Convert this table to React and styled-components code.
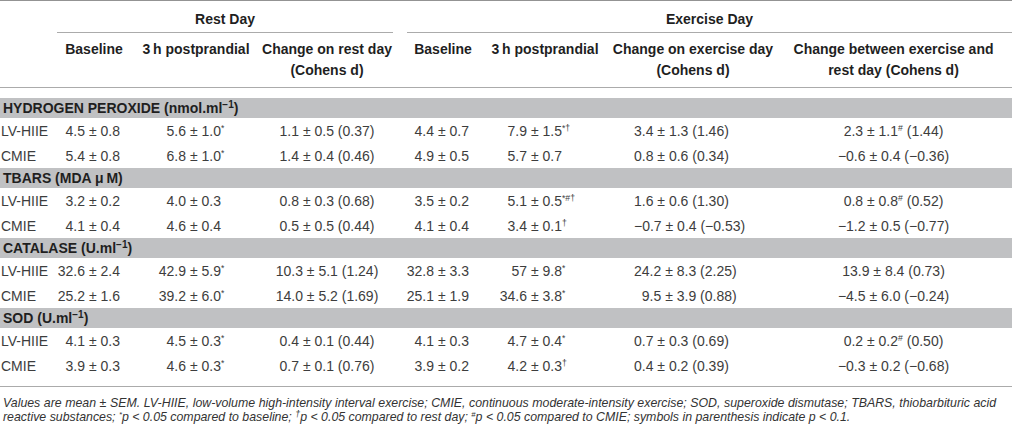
import React, { useLayoutEffect, useRef, useState } from 'react';
import styled, { createGlobalStyle } from 'styled-components';

const COLS = '57px 74px 130px 132px 14px 72px 132px 164px 237px';

const GlobalStyle = createGlobalStyle`
  html, body {
    margin: 0;
    padding: 0;
    background: #ffffff;
  }
  body {
    font-family: "Liberation Sans", Arial, sans-serif;
  }
`;

const Page = styled.div`
  width: 1012px;
  height: 427px;
  border-top: 1px solid #939393;
  box-sizing: border-box;
  overflow: hidden;
  color: #3d3d3d;
`;

const GroupRow = styled.div`
  display: grid;
  grid-template-columns: ${COLS};
  height: 32px;
`;

const GroupTitle = styled.div`
  grid-column: ${p => p.$col};
  border-bottom: 1px solid #ababab;
  padding-top: 9px;
  line-height: 18px;
  font-size: 14px;
  font-weight: 700;
  color: #1f1f1f;
  text-align: center;
`;

const HeadRow = styled.div`
  display: grid;
  grid-template-columns: ${COLS};
  height: 54px;
  border-bottom: 1px solid #ababab;
`;

const HeadCell = styled.div`
  padding-top: 6px;
  line-height: 21px;
  font-size: 14px;
  font-weight: 700;
  color: #1f1f1f;
  text-align: center;
  white-space: nowrap;
`;

const Body = styled.div`
  padding: 10px 0 8px;
  border-bottom: 1px solid #ababab;
`;

const Band = styled.div`
  height: 20px;
  line-height: 20px;
  padding-left: 3px;
  background: #c0c1c3;
  font-size: 14px;
  font-weight: 700;
  color: #1f1f1f;
  white-space: nowrap;
`;

const DataRow = styled.div`
  display: grid;
  grid-template-columns: ${COLS};
  height: 25px;
  align-items: center;
  font-size: 14px;
`;

const Label = styled.div`
  padding-left: 1px;
  white-space: nowrap;
`;

const Cell = styled.div`
  text-align: ${p => p.$align || 'left'};
  padding-left: ${p => (p.$pad ? `${p.$pad}px` : 0)};
  white-space: pre;
`;

const Aligned = styled.div`
  display: flex;
  white-space: pre;
`;

const Mean = styled.span`
  display: flex;
  justify-content: flex-end;
  flex: 0 0 ${p => p.$w}px;
  width: ${p => p.$w}px;
`;

const Rest = styled.span`
  white-space: pre;
`;

const Sup = styled.sup`
  font-size: ${p => (p.$big ? '0.72em' : '0.62em')};
  line-height: 0;
  vertical-align: baseline;
  position: relative;
  top: -0.5em;
`;

const Footnote = styled.div`
  padding: 9px 0 0 3px;
  font-size: 12px;
  font-style: italic;
  line-height: 14px;
  color: #333;
`;

const Line = styled.div`
  width: max-content;
  white-space: nowrap;
`;

const sections = [
  {
    title: (
      <>
        HYDROGEN PEROXIDE (nmol.ml<Sup $big>−1</Sup>)
      </>
    ),
    rows: [
      ['LV-HIIE', ['4.5', '0.8'], ['5.6', '1.0', '*'], '1.1 ± 0.5 (0.37)', ['4.4', '0.7'], ['7.9', '1.5', '*†'], '3.4 ± 1.3 (1.46)', ['2.3 ± 1.1', '#', ' (1.44)']],
      ['CMIE', ['5.4', '0.8'], ['6.8', '1.0', '*'], '1.4 ± 0.4 (0.46)', ['4.9', '0.5'], ['5.7', '0.7'], '0.8 ± 0.6 (0.34)', ['−0.6 ± 0.4 (−0.36)']],
    ],
  },
  {
    title: <>TBARS (MDA μ{'\u2009'}M)</>,
    rows: [
      ['LV-HIIE', ['3.2', '0.2'], ['4.0', '0.3'], '0.8 ± 0.3 (0.68)', ['3.5', '0.2'], ['5.1', '0.5', '*#†'], '1.6 ± 0.6 (1.30)', ['0.8 ± 0.8', '#', ' (0.52)']],
      ['CMIE', ['4.1', '0.4'], ['4.6', '0.4'], '0.5 ± 0.5 (0.44)', ['4.1', '0.4'], ['3.4', '0.1', '†'], '−0.7 ± 0.4 (−0.53)', ['−1.2 ± 0.5 (−0.77)']],
    ],
  },
  {
    title: (
      <>
        CATALASE (U.ml<Sup $big>−1</Sup>)
      </>
    ),
    rows: [
      ['LV-HIIE', ['32.6', '2.4'], ['42.9', '5.9', '*'], '10.3 ± 5.1 (1.24)', ['32.8', '3.3'], ['57', '9.8', '*'], '24.2 ± 8.3 (2.25)', ['13.9 ± 8.4 (0.73)']],
      ['CMIE', ['25.2', '1.6'], ['39.2', '6.0', '*'], '14.0 ± 5.2 (1.69)', ['25.1', '1.9'], ['34.6', '3.8', '*'], '\u20079.5 ± 3.9 (0.88)', ['−4.5 ± 6.0 (−0.24)']],
    ],
  },
  {
    title: (
      <>
        SOD (U.ml<Sup $big>−1</Sup>)
      </>
    ),
    rows: [
      ['LV-HIIE', ['4.1', '0.3'], ['4.5', '0.3', '*'], '0.4 ± 0.1 (0.44)', ['4.1', '0.3'], ['4.7', '0.4', '*'], '0.7 ± 0.3 (0.69)', ['0.2 ± 0.2', '#', ' (0.50)']],
      ['CMIE', ['3.9', '0.3'], ['4.6', '0.3', '*'], '0.7 ± 0.1 (0.76)', ['3.9', '0.2'], ['4.2', '0.3', '†'], '0.4 ± 0.2 (0.39)', ['−0.3 ± 0.2 (−0.68)']],
    ],
  },
];

// mean ± sd lined up on the ± sign
const PlusMinus = ({ value, anchor }) => {
  const [mean, sd, sup] = value;
  return (
    <Aligned>
      <Mean $w={anchor}>{mean}</Mean>
      <Rest>
        {` ± ${sd}`}
        {sup && <Sup>{sup}</Sup>}
      </Rest>
    </Aligned>
  );
};

// first line is justified to the full width, second one ends near x=851
const Notes = () => {
  const first = useRef(null);
  const second = useRef(null);
  const [fit, setFit] = useState(null);

  useLayoutEffect(() => {
    if (fit) return;
    const w1 = first.current.getBoundingClientRect().width;
    const w2 = second.current.getBoundingClientRect().width;
    const size = Math.min(12.6, (12 * 848) / w2);
    const scaled = (w1 * size) / 12;
    const gaps = 19;
    setFit({ size, spacing: Math.max(0, (994 - scaled) / gaps) });
  }, [fit]);

  return (
    <Footnote style={fit ? { fontSize: `${fit.size}px` } : undefined}>
      <Line ref={first} style={fit ? { wordSpacing: `${fit.spacing}px` } : undefined}>
        Values are mean ± SEM. LV-HIIE, low-volume high-intensity interval exercise; CMIE, continuous
        moderate-intensity exercise; SOD, superoxide dismutase; TBARS, thiobarbituric acid
      </Line>
      <Line ref={second}>
        reactive substances; <Sup>*</Sup>p &lt; 0.05 compared to baseline; <Sup $big>†</Sup>p &lt; 0.05
        compared to rest day; <Sup>#</Sup>p &lt; 0.05 compared to CMIE; symbols in parenthesis indicate
        p &lt; 0.1.
      </Line>
    </Footnote>
  );
};

const App = () => {
  return (
    <Page>
      <GlobalStyle />
      <GroupRow>
        <GroupTitle $col="2 / 5">Rest Day</GroupTitle>
        <GroupTitle $col="6 / 10">Exercise Day</GroupTitle>
      </GroupRow>
      <HeadRow>
        <HeadCell />
        <HeadCell>Baseline</HeadCell>
        <HeadCell>3{'\u2009'}h postprandial</HeadCell>
        <HeadCell>
          Change on rest day
          <br />
          (Cohens d)
        </HeadCell>
        <HeadCell />
        <HeadCell>Baseline</HeadCell>
        <HeadCell>3{'\u2009'}h postprandial</HeadCell>
        <HeadCell>
          Change on exercise day
          <br />
          (Cohens d)
        </HeadCell>
        <HeadCell>
          Change between exercise and
          <br />
          rest day (Cohens d)
        </HeadCell>
      </HeadRow>
      <Body>
        {sections.map((section, i) => (
          <React.Fragment key={i}>
            <Band>{section.title}</Band>
            {section.rows.map(row => (
              <DataRow key={row[0]}>
                <Label>{row[0]}</Label>
                <Cell>
                  <PlusMinus value={row[1]} anchor={28} />
                </Cell>
                <Cell>
                  <PlusMinus value={row[2]} anchor={55} />
                </Cell>
                <Cell $align="center">{row[3]}</Cell>
                <Cell />
                <Cell>
                  <PlusMinus value={row[4]} anchor={27} />
                </Cell>
                <Cell>
                  <PlusMinus value={row[5]} anchor={48} />
                </Cell>
                <Cell $pad={23}>{row[6]}</Cell>
                <Cell $align="center">
                  {row[7][0]}
                  {row[7][1] && <Sup>{row[7][1]}</Sup>}
                  {row[7][2]}
                </Cell>
              </DataRow>
            ))}
          </React.Fragment>
        ))}
      </Body>
      <Notes />
    </Page>
  );
};

export default App;
